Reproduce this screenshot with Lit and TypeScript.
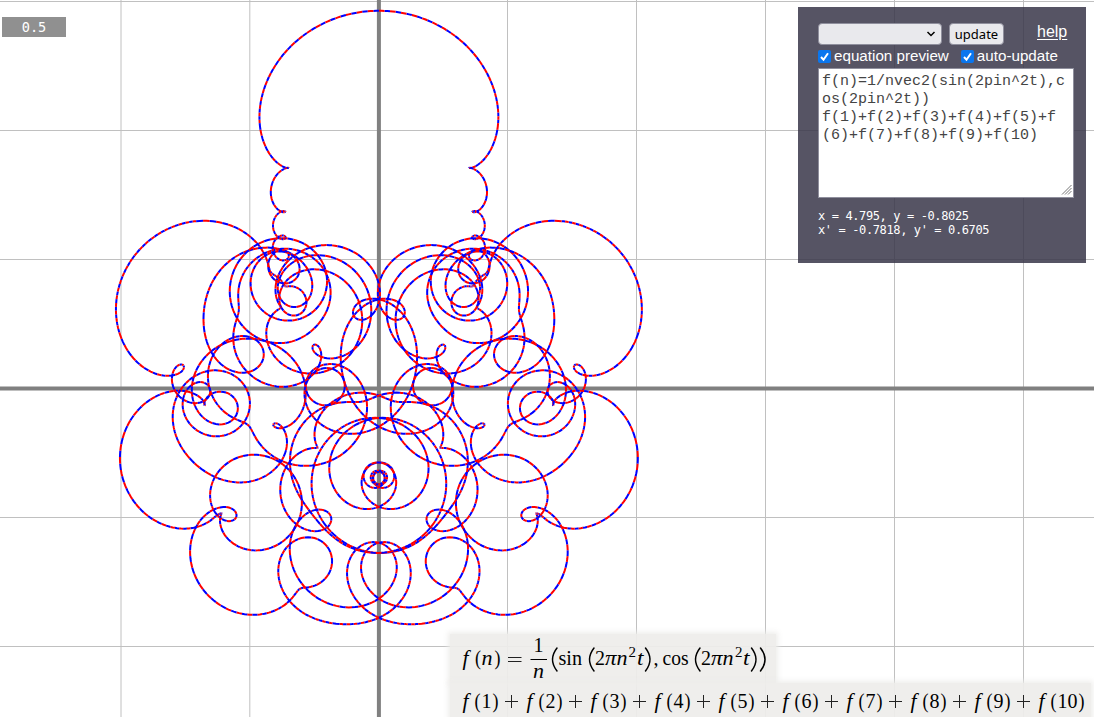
import { LitElement, html, svg, css } from "lit";
import { customElement, state } from "lit/decorators.js";

const UNIT = 129;
const CX = 378.9;
const CY = 388.6;
const STEPS = 2000;
const MAX_SEGMENT = 7;
const TERMS = 10;
const CHUNK = 40;

type Point = [number, number];

const point = (t: number): Point => {
  let x = 0;
  let y = 0;
  for (let n = 1; n <= TERMS; n++) {
    const a = 2 * Math.PI * n * n * t;
    x += Math.sin(a) / n;
    y += Math.cos(a) / n;
  }
  return [CX + x * UNIT, CY - y * UNIT];
};

/* Splits the parameter range until each segment is short; colours alternate.
   The result comes in chunks, so that later stretches cover earlier ones. */
const traceChunks = (): [string, string][] => {
  const chunks: [string, string][] = [];
  let index = 0;
  const f = (p: Point) => `${p[0].toFixed(2)} ${p[1].toFixed(2)}`;
  const walk = (t0: number, t1: number, depth: number) => {
    const a = point(t0);
    const b = point(t1);
    const tm = (t0 + t1) / 2;
    if (depth < 3 && Math.hypot(a[0] - b[0], a[1] - b[1]) > MAX_SEGMENT) {
      walk(t0, tm, depth + 1);
      walk(tm, t1, depth + 1);
      return;
    }
    if (index % CHUNK === 0) chunks.push(["", ""]);
    chunks[chunks.length - 1][index++ % 2] += `M${f(a)}L${f(point(tm))}L${f(b)}`;
  };
  for (let i = 0; i < STEPS; i++) walk(i / STEPS, (i + 1) / STEPS, 0);
  return chunks;
};

@customElement("curve-plot")
class CurvePlot extends LitElement {
  static styles = css`
    :host { display: block; width: 1094px; height: 717px; }
    svg { display: block; }
    .grid { stroke: #c0c0c0; stroke-width: 1; fill: none; }
    .axis { stroke: #808080; stroke-width: 4; fill: none; }
    .even, .odd { fill: none; stroke-width: 2; }
    .even { stroke: #f00; }
    .odd { stroke: #00f; }
  `;
  render() {
    const xs = [121, 249.8, 507.5, 636.5, 765.5, 894.5, 1023.5];
    const ys = [1.5, 130.5, 259.5, 517.5, 646.5];
    return html`<svg width="1094" height="717" viewBox="0 0 1094 717">
      ${xs.map((x) => svg`<path class="grid" d="M${x} 0V717"/>`)}
      ${ys.map((y) => svg`<path class="grid" d="M0 ${y}H1094"/>`)}
      <path class="axis" d="M378.9 0V717M0 388.6H1094" />
      ${traceChunks().map(([even, odd], i) =>
        i % 2
          ? svg`<path class="even" d=${even}/><path class="odd" d=${odd}/>`
          : svg`<path class="odd" d=${odd}/><path class="even" d=${even}/>`
      )}
    </svg>`;
  }
}

@customElement("equation-preview")
class EquationPreview extends LitElement {
  static styles = css`
    :host { display: flex; flex-direction: column; align-items: flex-start; color: #000; }
    .line { background: rgba(238, 237, 235, 0.93); box-shadow: 0 0 5px 2px rgba(238, 237, 235, 0.93); }
    .first { width: 326px; height: 49px; }
    .second { width: 641px; height: 36px; }
    svg { display: block; overflow: visible; }
    text { font-family: "Liberation Serif", serif; font-size: 20px; }
    .i { font-style: italic; }
    .sup { font-size: 14px; }
    .bar { stroke: #000; stroke-width: 1; }
    .paren { fill: none; stroke: #000; stroke-width: 1.5; stroke-linecap: round; }
    .plus { fill: none; stroke: #222; stroke-width: 1; }
  `;
  private t(x: number, y: number, s: string, w: number, cls = "") {
    return svg`<text class=${cls} x=${x} y=${y} textLength=${w} lengthAdjust="spacingAndGlyphs">${s}</text>`;
  }
  private f(x: number, y: number) {
    return this.t(x + 1.5, y, "f", 6, "i");
  }
  private big(x: number, right = false) {
    return right
      ? svg`<path class="paren" d="M${x} 14Q${x + 9} 25.5 ${x} 37"/>`
      : svg`<path class="paren" d="M${x + 5} 14Q${x - 4} 25.5 ${x + 5} 37"/>`;
  }
  render() {
    return html`
      <div class="line first">
        <svg width="326" height="49">
          ${this.f(11, 31)}${this.t(25, 31, "(", 6)}${this.t(31.5, 31, "n", 11, "i")}${this.t(44.5, 31, ")", 6)}
          <path class="plus" d="M58 23.5H71.5M58 27.5H71.5" />
          ${this.t(83.5, 18, "1", 10)}<path class="bar" d="M80.5 25.5H97" />${this.t(83, 44, "n", 11, "i")}
          ${this.big(102)}${this.t(108.5, 31, "sin", 23.5)}
          ${this.big(139)}${this.t(145, 31, "2", 10)}${this.t(155, 31, "π", 11.5, "i")}${this.t(166.5, 31, "n", 11, "i")}${this.t(178.5, 23, "2", 7.5, "sup")}${this.t(187, 31, "t", 6.5, "i")}
          ${this.big(195.5, true)}${this.t(203.5, 31, ",", 5)}${this.t(212.5, 31, "cos", 26)}
          ${this.big(245)}${this.t(251, 31, "2", 10)}${this.t(261, 31, "π", 11.5, "i")}${this.t(272.5, 31, "n", 11, "i")}${this.t(285, 23, "2", 7.5, "sup")}${this.t(293, 31, "t", 6.5, "i")}
          ${this.big(301.5, true)}${this.big(310.5, true)}
        </svg>
      </div>
      <div class="line second">
        <svg width="641" height="36">
          ${Array.from({ length: 10 }, (_, k) => {
            const x = 11 + k * 64;
            const w = k === 9 ? 20 : 10;
            return svg`${this.f(x, 25)}${this.t(x + 13.5, 25, "(", 6)}${this.t(x + 20.5, 25, String(k + 1), w)}${this.t(x + 21 + w + 0.5, 25, ")", 6)}
              ${k < 9 ? svg`<path class="plus" d="M${x + 44} 18.5H${x + 57}M${x + 50.5} 12V25"/>` : ""}`;
          })}
        </svg>
      </div>`;
  }
}

@customElement("control-panel")
class ControlPanel extends LitElement {
  static styles = css`
    :host { display: block; box-sizing: border-box; width: 288px; height: 256px; padding: 16px 12px 0 20px; background: rgba(58, 56, 74, 0.86); color: #fff; font: 16px/19px "Liberation Sans", sans-serif; }
    .row { display: flex; align-items: flex-start; height: 24px; }
    .select, .button { box-sizing: border-box; height: 22px; border: 1px solid #8f8f9d; border-radius: 4px; background: #e9e9ed; }
    .select { width: 124px; display: flex; justify-content: flex-end; align-items: center; padding-right: 5px; }
    .button { width: 55px; margin-left: 7px; padding: 0; color: #000; font: 13px/20px "Noto Sans", sans-serif; text-align: center; }
    .help { margin: -1px 0 0 33px; color: #fff; text-decoration: underline; text-underline-offset: 2px; }
    .checks { display: flex; align-items: center; height: 18px; }
    .check { display: flex; align-items: center; gap: 3px; height: 17px; line-height: 17px; font-size: 15.2px; white-space: nowrap; }
    .check + .check { margin-left: 12px; }
    .check span { display: block; margin-top: -1px; }
    .box { display: block; }
    .area { position: relative; box-sizing: border-box; width: 256px; height: 130px; margin-top: 3px; padding: 4px 3px; border: 1px solid #8f8f9d; background: #fff; color: #444; font: 15px/18px "Liberation Mono", monospace; white-space: pre; }
    .grip { position: absolute; right: 1px; bottom: 2px; }
    .coords { margin: 11px 0 0; font: 12px/14px "DejaVu Sans Mono", monospace; letter-spacing: -0.38px; white-space: pre; }
  `;
  @state() private code = "f(n)=1/nvec2(sin(2pin^2t),c\nos(2pin^2t))\nf(1)+f(2)+f(3)+f(4)+f(5)+f\n(6)+f(7)+f(8)+f(9)+f(10)";
  private check(label: string) {
    return html`<label class="check"><svg class="box" width="13" height="13"><rect width="13" height="13" rx="2" fill="#0a76ee"/><path d="M3 7L5.5 9.7L10 3.2" fill="none" stroke="#fff" stroke-width="2"/></svg><span>${label}</span></label>`;
  }
  render() {
    return html`
      <div class="row">
        <div class="select"><svg width="10" height="8"><path d="M1.5 2L5 5.5L8.5 2" fill="none" stroke="#000" stroke-width="1.5"/></svg></div>
        <button class="button">update</button>
        <a class="help">help</a>
      </div>
      <div class="checks">${this.check("equation preview")}${this.check("auto-update")}</div>
      <div class="area">${this.code}<svg class="grip" width="11" height="11"><path d="M1 10.5L10.5 1M4 10.5L10.5 4M7 10.5L10.5 7" stroke="#777" fill="none"/></svg></div>
      <div class="coords">x = 4.795, y = -0.8025
x' = -0.7818, y' = 0.6705</div>`;
  }
}

@customElement("app-root")
class AppRoot extends LitElement {
  static styles = css`
    :host { display: block; position: relative; width: 1094px; height: 717px; overflow: hidden; background: #fff; }
    .slider { position: absolute; left: 2px; top: 17px; width: 64px; height: 20px; background: #909090; color: #fff; font: 13.6px/21px "DejaVu Sans Mono", monospace; text-align: center; }
    .panel { position: absolute; left: 798px; top: 7px; }
    .preview { position: absolute; left: 450px; top: 634px; }
  `;
  render() {
    return html`
      <curve-plot></curve-plot>
      <div class="slider">0.5</div>
      <control-panel class="panel"></control-panel>
      <equation-preview class="preview"></equation-preview>`;
  }
}
